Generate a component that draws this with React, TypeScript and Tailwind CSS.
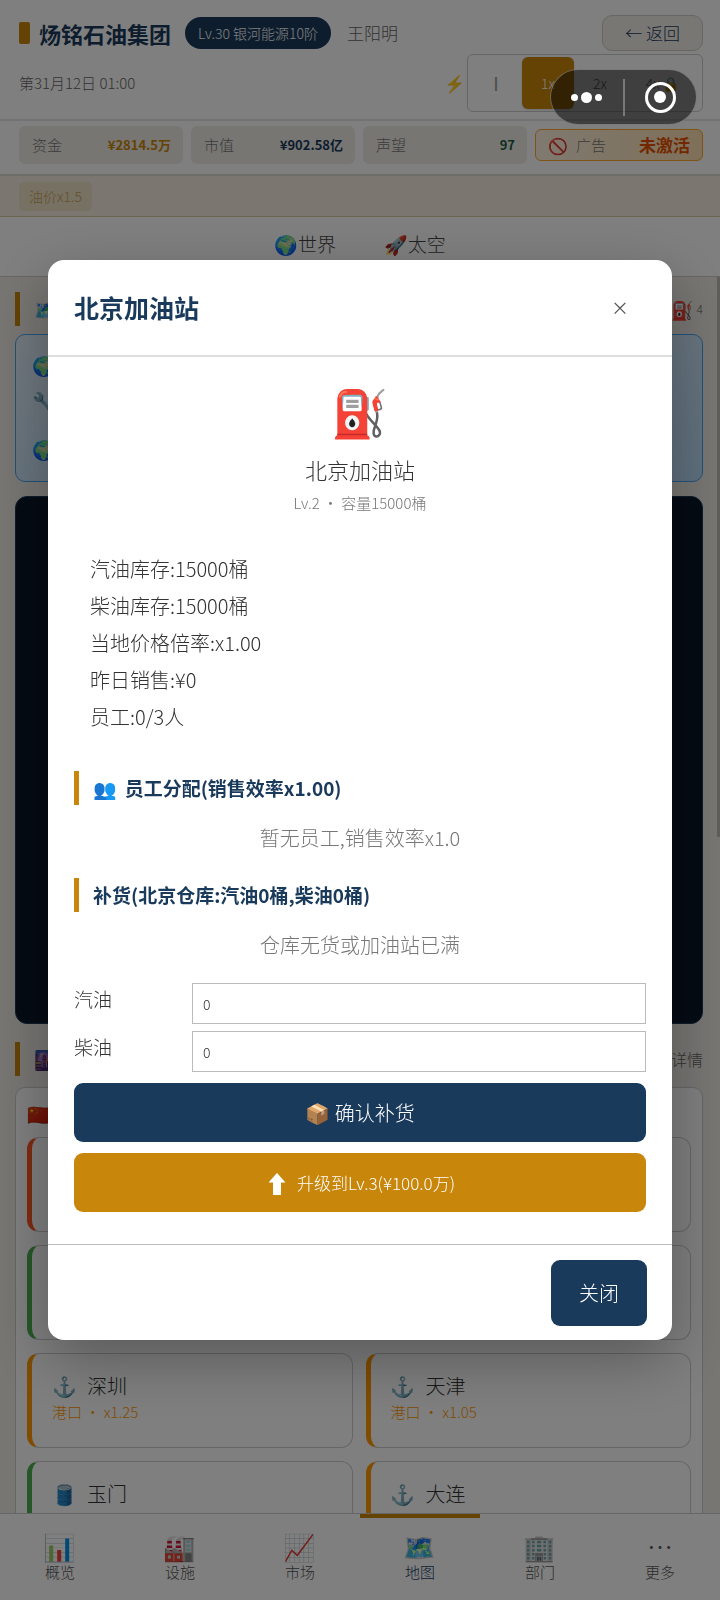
import type { ReactNode } from 'react';
import clsx from 'clsx';

const speeds = ['║', '1x', '2x', '4x 🔒'];

const stats = [
  { label: '资金', value: '¥2814.5万', color: 'text-[#c8860a]' },
  { label: '市值', value: '¥902.58亿', color: 'text-[#1a3a5c]' },
  { label: '声望', value: '97', color: 'text-[#1b5e40]' },
];

const cities = [
  { icon: '🏛️', name: '北京', type: '总部', rate: 'x1.00', border: 'border-l-[#ff5722]', text: 'text-[#ff5722]' },
  { icon: '⚓', name: '上海', type: '港口', rate: 'x1.30', border: 'border-l-[#ff9800]', text: 'text-[#ff9800]' },
  { icon: '🛢️', name: '大庆', type: '油田', rate: 'x0.85', border: 'border-l-[#4caf50]', text: 'text-[#4caf50]' },
  { icon: '⚓', name: '广州', type: '港口', rate: 'x1.20', border: 'border-l-[#ff9800]', text: 'text-[#ff9800]' },
  { icon: '⚓', name: '深圳', type: '港口', rate: 'x1.25', border: 'border-l-[#ff9800]', text: 'text-[#ff9800]' },
  { icon: '⚓', name: '天津', type: '港口', rate: 'x1.05', border: 'border-l-[#ff9800]', text: 'text-[#ff9800]' },
  { icon: '🛢️', name: '玉门', type: '油田', rate: 'x0.90', border: 'border-l-[#4caf50]', text: 'text-[#4caf50]' },
  { icon: '⚓', name: '大连', type: '港口', rate: 'x1.10', border: 'border-l-[#ff9800]', text: 'text-[#ff9800]' },
];

const navItems = [
  { icon: '📊', label: '概览' },
  { icon: '🏭', label: '设施' },
  { icon: '📈', label: '市场' },
  { icon: '🗺️', label: '地图' },
  { icon: '🏢', label: '部门' },
  { icon: '⋯', label: '更多' },
];

const details = ['汽油库存:15000桶', '柴油库存:15000桶', '当地价格倍率:x1.00', '昨日销售:¥0', '员工:0/3人'];

const fuels = [
  { id: 'gasoline', label: '汽油' },
  { id: 'diesel', label: '柴油' },
];

function SectionTitle({ children }: { children: ReactNode }) {
  return (
    <h3 className="flex h-[34px] items-center gap-2 border-l-[5px] border-[#c8860a] pl-[14px] text-[19px] font-bold text-[#1a3a5c]">
      {children}
    </h3>
  );
}

export default function App() {
  return (
    <div className="flex h-screen flex-col overflow-hidden bg-[#f0ece6] font-['Noto_Sans_CJK_SC','Noto_Color_Emoji',sans-serif] font-light text-[#333]">
      <header className="border-b-2 border-[#e4e4e4] bg-white pt-[15px] pr-[17px] pb-[7px] pl-[19px]">
        <div className="flex h-9 items-center">
          <span className="h-[22px] w-[11px] rounded-xs bg-[#c8860a]" />
          <h1 className="ml-[9px] text-[22px] leading-8 font-bold text-[#1a3a5c]">炀铭石油集团</h1>
          <span className="ml-[14px] flex h-8 items-center rounded-full bg-[#1a3a5c] px-[13px] text-[14px] text-white">
            Lv.30 银河能源10阶
          </span>
          <span className="ml-4 text-[17px] text-[#666]">王阳明</span>
          <button className="ml-auto h-9 rounded-[10px] border border-[#d0ccc4] bg-[#f0eee8] px-[22px] text-[17px] text-[#1a3a5c]">
            ← 返回
          </button>
        </div>
        <div className="mt-[3px] flex items-center">
          <span className="text-[15px] text-[#666]">第31月12日 01:00</span>
          <span className="ml-auto text-[17px]">⚡</span>
          <div className="ml-px flex h-[58px] rounded-[6px] border border-[#ccc] p-[2px] text-[14px] text-[#666]">
            {speeds.map((s, i) => (
              <button
                key={s}
                className={clsx(i === 3 ? 'w-[74px]' : 'w-[52px]', i === 1 && 'rounded-[6px] bg-[#c8860a] text-white shadow')}
              >
                {s}
              </button>
            ))}
          </div>
        </div>
      </header>

      <div className="flex items-center gap-2 border-b-2 border-[#ddd9d2] bg-white pt-[5px] pr-[17px] pb-[10px] pl-[19px]">
        {stats.map((s) => (
          <div key={s.label} className="flex h-[38px] flex-1 items-center justify-between rounded-[6px] bg-[#efede6] pr-3 pl-[13px]">
            <span className="text-[15px] text-[#777]">{s.label}</span>
            <span className={clsx('text-[13px] font-bold', s.color)}>{s.value}</span>
          </div>
        ))}
        <button className="flex h-8 w-[168px] items-center justify-between rounded-[6px] border border-[#ffa726] bg-linear-to-r from-[#fff3e0] to-[#ffe0b2] px-3">
          <span className="flex items-center gap-2 text-[15px] text-[#777]"><span className="text-[16px]">🚫</span>广告</span>
          <span className="text-[17px] font-bold text-[#e65100]">未激活</span>
        </button>
      </div>

      <div className="flex h-[41px] items-center border-b border-[#d8c8a0] bg-[#f7efe0] pl-[19px]">
        <span className="rounded-[5px] bg-[#efe2c8] px-[10px] py-1 text-[14px] text-[#c8a050]">油价x1.5</span>
      </div>

      <nav className="flex h-[60px] items-start justify-center gap-12 border-b border-[#ccc] bg-white pt-[13px] text-[19px] text-[#444]">
        <button>🌍世界</button>
        <button>🚀太空</button>
      </nav>

      <main className="relative min-h-0 flex-1 overflow-hidden pt-[15px] pr-[17px] pl-[15px]">
        <div className="flex items-center justify-between">
          <SectionTitle>🗺️ 世界地图</SectionTitle>
          <span className="flex items-center gap-[3px] text-[12px] text-[#666]"><span className="text-[18px]">⛽</span>4</span>
        </div>
        <div className="mt-2 h-[148px] rounded-[10px] border border-[#42a5f5] bg-linear-to-br from-[#e3f2fd] to-[#bbdefb] px-4 py-3 text-[19px] leading-9">
          <p>🌍</p>
          <p>🔧</p>
          <p className="mt-3">🌍</p>
        </div>
        <div className="mt-[14px] h-[528px] rounded-[12px] border border-[#1a3a5c] bg-[#0a1628]" />
        <div className="mt-[18px] flex items-center justify-between">
          <SectionTitle>🌆 城市列表</SectionTitle>
          <span className="text-[16px] text-[#666]">详情</span>
        </div>
        <section className="mt-[11px] rounded-[10px] border border-[#ccc] bg-white px-[11px] pt-[11px]">
          <h4 className="h-7 text-[20px]">🇨🇳 中国</h4>
          <ul className="mt-[10px] grid grid-cols-2 gap-[13px]">
            {cities.map((c) => (
              <li key={c.name} className={clsx('h-[95px] rounded-[12px] border border-l-[5px] border-[#ccc] px-5 pt-[17px]', c.border)}>
                <div className="flex h-[30px] items-center gap-[10px] text-[20px]">
                  <span>{c.icon}</span>
                  <span>{c.name}</span>
                </div>
                <p className={clsx('text-[15px]', c.text)}>{c.type} · {c.rate}</p>
              </li>
            ))}
          </ul>
        </section>
        {/* Scroll thumb */}
        <div className="absolute top-0 right-0 h-[560px] w-[3px] bg-black/20" />
      </main>

      <nav className="grid h-[87px] grid-cols-6 border-t border-[#ccc] bg-white">
        {navItems.map((n) => (
          <button
            key={n.label}
            className={clsx(
              'flex flex-col items-center border-t-4 pt-3 text-[15px] leading-5',
              n.label === '地图' ? 'border-[#c8860a] text-[#1a3a5c]' : 'border-transparent text-[#555]',
            )}
          >
            <span className="text-[26px] leading-8">{n.icon}</span>
            {n.label}
          </button>
        ))}
      </nav>

      {/* Station dialog */}
      <div className="fixed inset-0 flex items-center justify-center bg-black/50 px-12">
        <div role="dialog" aria-labelledby="station-title" className="w-full rounded-2xl bg-white shadow-[0_20px_60px_rgba(0,0,0,0.3)]">
          <div className="flex h-[97px] items-center justify-between border-b-2 border-[#ddd] px-[26px]">
            <h2 id="station-title" className="text-[25px] font-bold text-[#1a3a5c]">北京加油站</h2>
            <button aria-label="关闭窗口" className="h-[52px] w-[52px] text-[18px] font-normal text-[#555]">×</button>
          </div>
          <div className="px-[26px] pt-[21px] pb-8">
            <div className="text-center">
              <div className="text-[46px] leading-[64px]">⛽</div>
              <p className="mt-[9px] text-[22px] leading-9">北京加油站</p>
              <p className="text-[15px] leading-8 text-[#777]">Lv.2 · 容量15000桶</p>
            </div>
            <ul className="mt-[31px] px-4 text-[20px] leading-[37px]">
              {details.map((d) => (
                <li key={d}>{d}</li>
              ))}
            </ul>
            <div className="mt-9">
              <SectionTitle><span>👥</span>员工分配(销售效率x1.00)</SectionTitle>
            </div>
            <p className="pt-[14px] pb-[22px] text-center text-[20px] leading-[37px] text-[#777]">暂无员工,销售效率x1.0</p>
            <SectionTitle>补货(北京仓库:汽油0桶,柴油0桶)</SectionTitle>
            <p className="pt-[14px] pb-[20px] text-center text-[20px] leading-[37px] text-[#777]">仓库无货或加油站已满</p>
            <div className="flex flex-col gap-[7px]">
              {fuels.map((f) => (
                <div key={f.id} className="flex">
                  <label htmlFor={f.id} className="w-[118px] text-[19px] leading-8">{f.label}</label>
                  <input id={f.id} type="text" defaultValue="0" className="h-[41px] min-w-0 flex-1 border border-[#bbb] px-[10px] text-[14px]" />
                </div>
              ))}
            </div>
            <button className="mt-[11px] h-[59px] w-full rounded-[9px] bg-[#1a3a5c] text-[20px] text-white">📦 确认补货</button>
            <button className="mt-[11px] flex h-[59px] w-full items-center justify-center gap-2 rounded-[9px] bg-[#c8860a] text-[17px] text-white">
              <span className="text-[24px]">⬆</span>
              升级到Lv.3(¥100.0万)
            </button>
          </div>
          <div className="flex justify-end border-t border-[#bbb] px-[25px] pt-[15px] pb-[14px]">
            <button className="h-[66px] w-24 rounded-[9px] bg-[#1a3a5c] text-[20px] text-white">关闭</button>
          </div>
        </div>
      </div>

      {/* Host app capsule */}
      <div className="fixed top-[69px] right-[23px] flex h-14 w-[147px] items-center rounded-full border border-white/30 bg-black/50">
        <button aria-label="菜单" className="flex flex-1 items-center justify-center gap-[3px]">
          <span className="size-[7px] rounded-full bg-white" />
          <span className="size-[11px] rounded-full bg-white" />
          <span className="size-[7px] rounded-full bg-white" />
        </button>
        <span className="h-[37px] w-[2px] bg-white/30" />
        <button aria-label="退出" className="flex flex-1 justify-center">
          <span className="flex size-[31px] items-center justify-center rounded-full border-[3px] border-white">
            <span className="size-3 rounded-full bg-white" />
          </span>
        </button>
      </div>
    </div>
  );
}
